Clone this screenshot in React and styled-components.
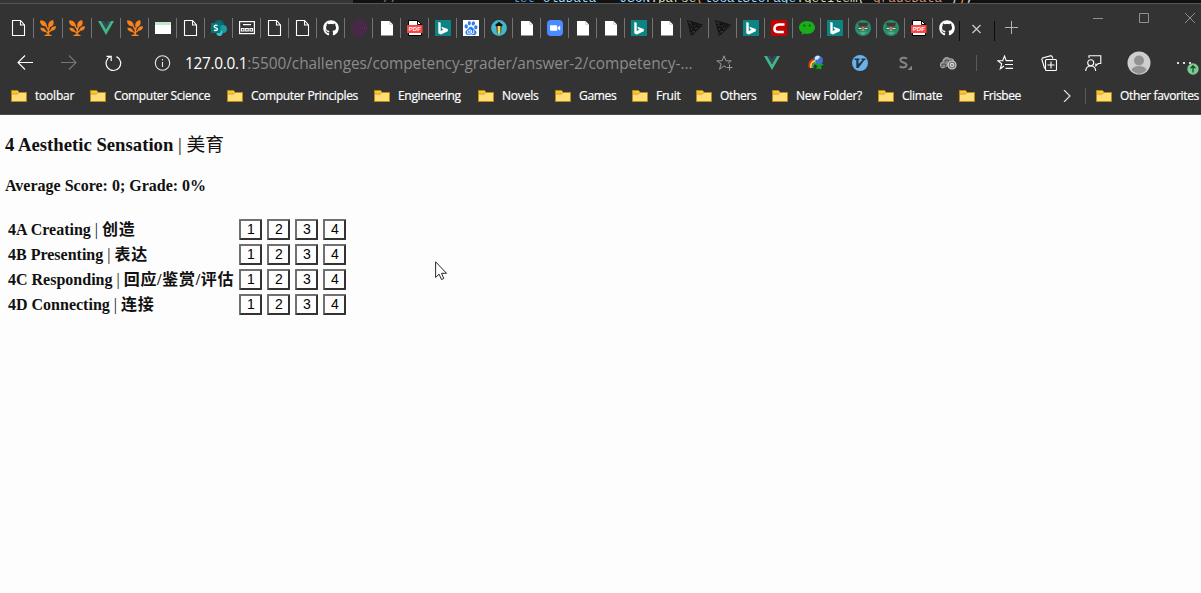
import React from "react";
import styled, { createGlobalStyle } from "styled-components";
import { FaGithub } from "react-icons/fa";
import { SiBaidu } from "react-icons/si";

const Global = createGlobalStyle`
  * { box-sizing: border-box; }
  html, body, #root { height: 100%; }
  body { margin: 0; background: #fdfdfd; overflow: hidden; }
  svg { display: block; flex: none; }
`;

const ui = `"Open Sans", "Noto Sans", sans-serif`;

const Window = styled.div`
  position: relative;
  display: flex;
  flex-direction: column;
  height: 593px;
  width: 1201px;
  overflow: hidden;
`;

const Chrome = styled.header`
  background: #333;
  color: #fff;
  border-bottom: 1px solid #4b4b4b;
  height: 115px;
  font-family: ${ui};
`;

/* Sliver of the editor window behind the browser */
const EditorEdge = styled.div`
  display: flex;
  height: 4px;
  overflow: hidden;
  border-bottom: 1px solid #555;
  background: #111;
`;
const EditorSide = styled.div`
  width: 353px;
  background: #363636;
`;
const Gutter = styled.span`
  width: 159px;
  padding-left: 30px;
  font: 12.8px/15px "Liberation Mono", monospace;
  color: #858585;
  margin-top: -9px;
`;
const Code = styled.code`
  font: 12.8px/15px "Liberation Mono", monospace;
  white-space: pre;
  color: #d4d4d4;
  margin-top: -9px;
`;
const Tok = styled.span`
  color: ${(p) => p.$c};
`;

const TabStrip = styled.div`
  display: flex;
  height: 42px;
  padding-left: 5px;
`;
const Tab = styled.div`
  width: ${(p) => (p.$wide ? 29 : 28)}px;
  height: 20px;
  margin-top: 14px;
  padding: 2px 0 0 6px;
  border-right: 1px solid #747474;
  flex: none;
`;
const ActiveTab = styled.div`
  display: flex;
  width: 62px;
  height: 20px;
  margin-top: 14px;
  padding: 2px 0 0 6px;
  flex: none;
`;
const CloseSlot = styled.div`
  display: flex;
  width: 36px;
  height: 20px;
  margin: 1px 0 0 4px;
  padding: 3px 0 0 12px;
  border-left: 1px solid #0c0c0c;
  border-right: 1px solid #0c0c0c;
`;
const NewTab = styled.div`
  padding: 17px 0 0 10px;
  width: 98px;
`;
const WindowControls = styled.div`
  display: flex;
  gap: 36px;
  padding-top: 9px;
`;

const Toolbar = styled.div`
  display: flex;
  align-items: center;
  height: 34px;
`;
const Slot = styled.div`
  width: ${(p) => p.$w}px;
  padding-left: ${(p) => p.$l || 0}px;
  flex: none;
`;
const Address = styled.div`
  width: 531px;
  padding-top: 2px;
  font-size: 15.4px;
  line-height: 32px;
  letter-spacing: -0.05px;
  color: #8b8b8b;
  white-space: nowrap;
  flex: none;
`;
const Host = styled.span`
  color: #fff;
  letter-spacing: -0.3px;
`;
const VRule = styled.div`
  width: 1px;
  height: 16px;
  background: #5a5a5a;
  flex: none;
`;
const Menu = styled.div`
  position: relative;
  width: 24px;
  height: 24px;
`;
const UpdateBadge = styled.div`
  position: absolute;
  left: 11px;
  top: 12px;
`;

const Bookmarks = styled.nav`
  display: flex;
  align-items: center;
  height: 32px;
  padding-left: 11px;
  font-size: 12px;
  line-height: 18px;
`;
const Bookmark = styled.div`
  display: flex;
  align-items: center;
  gap: 8px;
  width: ${(p) => p.$w}px;
  letter-spacing: ${(p) => p.$ls || 0}px;
  white-space: nowrap;
  flex: none;
  -webkit-text-stroke: 0.2px #fff;
`;

const Page = styled.main`
  flex: 1;
  background: #fdfdfd;
  padding-left: 5px;
  color: #111;
  font-family: "Liberation Serif", "Noto Sans CJK SC", serif;
`;
const Title = styled.h3`
  margin: 19px 0 0;
  font-size: 18.72px;
  line-height: 22px;
`;
const Light = styled.span`
  font-weight: 400;
`;
const Summary = styled.h4`
  margin: 20px 0 0;
  font-size: 16px;
  line-height: 20px;
`;
const Scores = styled.table`
  margin-top: 20px;
  border-spacing: 2px;
  font-size: 16px;
  line-height: 20px;
`;
const Skill = styled.th`
  height: 23px;
  width: 229px;
  padding: 0 1px;
  text-align: left;
  white-space: nowrap;
`;
const SkillText = styled.div`
  height: 20px;
`;
const Chinese = styled.span`
  letter-spacing: 0.7px;
`;
const ScoreCell = styled.td`
  width: 26px;
  height: 23px;
  padding: 1px;
`;
const ScoreButton = styled.button`
  display: block;
  width: 23px;
  height: 21px;
  padding: 0 0 0 1px;
  border: 2px solid;
  border-color: #707070 #333 #333 #707070;
  border-radius: 1px;
  background: #fdfdfd;
  color: #000;
  font: 14px/17px "Liberation Sans", sans-serif;
`;
const Pointer = styled.div`
  position: absolute;
  left: 435px;
  top: 261px;
`;

const Svg = ({ w = 16, h = 16, children, ...p }) => (
  <svg width={w} height={h} viewBox={`0 0 ${w} ${h}`} fill="none" {...p}>
    {children}
  </svg>
);

const Doc = () => (
  <Svg stroke="#fff" strokeWidth="1.1">
    <path d="M1.5.5h8l4 4.500v10.500h-12zM9.500.5v4.500h4" />
  </Svg>
);
const WhitePage = () => (
  <Svg>
    <path d="M2 1h8.5L14 4.5V15.5H2z" fill="#fff" />
    <path d="M10.5 1v3.5H14" stroke="#ccc" strokeWidth=".7" />
  </Svg>
);
const Plant = () => (
  <Svg fill="#f9831c">
    <path d="M0 .5C3.500 0 6.800 2 6.800 6.300 2.800 6.800 0 4.500 0 .5zM13 0c1.600 3.400.4 6.500-4 7.500C7 4.300 9 .9 13 0zM16 6.300c0 3.200-2.200 4.900-5.500 4.500.1-3.200 2.300-4.800 5.500-4.500zM.3 7.800c3.200-.5 5.400.8 5.900 4C2.900 12.300.6 10.800.3 7.800z" />
    <path d="M5.500 5l2.500 4.500M9.800 6L8.300 9.500V15M5 11l3 2M11.500 10L8.500 12.500" stroke="#f9831c" strokeWidth="1.4" />
    <path d="M3.800 16q4.200-3.800 8.400 0z" />
  </Svg>
);
const Vue = () => (
  <Svg>
    <path d="M0 1h3.200L8 9.300 12.800 1H16L8 14.900z" fill="#41b883" />
    <path d="M3.200 1h3L8 4.200 9.800 1h3L8 9.300z" fill="#35495e" />
  </Svg>
);
const Panel = () => (
  <Svg>
    <path d="M0 2h16v12H0z" fill="#fff" />
    <path d="M0 2h16v3H0z" fill="#c5e6c8" />
  </Svg>
);
const SharePoint = () => (
  <Svg>
    <circle cx="8" cy="5" r="5" fill="#036c70" />
    <circle cx="12" cy="9" r="4" fill="#1a9ba1" />
    <circle cx="8.5" cy="13" r="3" fill="#37c6d0" />
    <rect y="3" width="9.5" height="10" rx="1" fill="#03787c" />
    <path d="M6.500 5.700C5 4.800 3 5.300 3.200 6.700c.2 1.300 3.300.9 3.300 2.500 0 1.400-2.200 1.700-3.500.8" stroke="#fff" strokeWidth="1.3" />
  </Svg>
);
const Router = () => (
  <Svg stroke="#fff" strokeWidth="1.2">
    <rect x=".6" y="1.600" width="14.800" height="12" />
    <path d="M4 4.600h8M2.500 8.500h2.500v2.500h-2.500zM6.700 8.500h2.500v2.500h-2.500zM11 8.500h2.500v2.500h-2.500z" />
  </Svg>
);
const Purple = () => (
  <Svg stroke="#a0009c" strokeWidth="1" strokeDasharray="1.200 1.300">
    <circle cx="8" cy="8" r="7.400" />
    <circle cx="8" cy="8" r="5.500" />
    <circle cx="8" cy="8" r="3.500" />
    <circle cx="8" cy="8" r="1.500" />
  </Svg>
);
const Pdf = () => (
  <Svg>
    <path d="M1.500.5h9l4 4v11h-13z" fill="#fff" stroke="#000" />
    <path d="M10.500.5v4h4" stroke="#000" />
    <rect y="5" width="15.500" height="8" rx=".6" fill="#ff4541" />
    <text x="7.800" y="11.200" textAnchor="middle" fontFamily="Liberation Sans, sans-serif" fontWeight="700" fontSize="6" fill="#fff">PDF</text>
  </Svg>
);
const Bing = () => (
  <Svg>
    <path d="M0 0h16v16H0z" fill="#0c8484" />
    <path d="M3.300 2l2.400.8v8.300l2.800-1.500-1.300-.7-.9-2.200 6.500 2.200v2.400l-7 3.300L3.300 13.200z" fill="#fff" />
  </Svg>
);
const BaiduBox = styled.div`
  width: 16px;
  height: 16px;
  padding: 1px;
  background: #fff;
  color: #2a7cf0;
`;
const Baidu = () => (
  <BaiduBox>
    <SiBaidu size={14} />
  </BaiduBox>
);
const Pen = () => (
  <Svg>
    <circle cx="8" cy="8" r="7.900" fill="#40b8cf" />
    <path d="M5.500 5.500h5L9.600 13.500H6.400z" fill="#f8d64c" />
    <path d="M4 5l4-3.300L12 5l-1.500 1.500L10 13.500H9.500V6H6.500v7.500H6L5.500 6.500z" fill="#111" />
  </Svg>
);
const Zoom = () => (
  <Svg>
    <rect width="16" height="16" rx="4" fill="#4a8cff" />
    <path d="M3 5.200h6q1.200 0 1.200 1.200v4.400H4.200Q3 10.800 3 9.600zM10.800 7.200L13.200 5.400v5.200L10.800 8.900z" fill="#fff" />
  </Svg>
);
const Mesh = () => (
  <Svg stroke="#101010" strokeWidth=".9">
    <path d="M.5.600L15.500 5 4.500 15.500zM4.500 1.800l4 9.700M8.500 2.900l3.200 5.700M12 4l1.300 3M1.500 4.200L12 4M2.500 8l11-2M3.500 11.500L11.700 8.600M1.500 4.200l7 7.300M4.500 1.800L11.700 8.600M2.500 8l3.500 6M2.500 8l6-5M3.500 11.500l8.500-7.500" />
  </Svg>
);
const RedC = () => (
  <Svg>
    <path d="M0 0h16v16H0z" fill="#c70000" />
    <path d="M13.500 4.500H8.500Q3.800 4.600 3.400 8.500 3.400 12 7 12h5.800" stroke="#fff" strokeWidth="2.5" />
  </Svg>
);
const Chat = () => (
  <Svg>
    <path d="M8 1c4.500 0 8 2.800 8 6.400s-3.500 6.500-8 6.500c-.9 0-1.800-.1-2.600-.3L2.600 15l.5-2.500C1.200 11.300 0 9.500 0 7.400 0 3.800 3.500 1 8 1z" fill="#1aad19" />
    <circle cx="5.3" cy="5.500" r="1" fill="#14500f" />
    <circle cx="10.7" cy="5.500" r="1" fill="#14500f" />
  </Svg>
);
const Grad = () => (
  <Svg>
    <circle cx="8" cy="8" r="8" fill="#249070" />
    <path d="M4 6h8v3.500L8 11 4 9.500z" fill="#c4a283" />
    <path d="M3 2.700h10l-1 4H4z" fill="#45372d" />
    <path d="M3 7.500h4v2H3zM9 7.500h4v2H9z" fill="#d9ecc8" stroke="#234f40" strokeWidth=".8" />
    <path d="M4 12.500h8L8 14.500z" fill="#6fb59c" />
  </Svg>
);
const Github = () => <FaGithub size={16} color="#fff" />;

const Folder = () => (
  <Svg>
    <path d="M.5 2.500h6l1.500 2h7.500v9H.5z" fill="#ffde7a" stroke="#b78a12" />
    <path d="M1 3h5.200l1 1.500L6 5.500H1z" fill="#ffc530" />
    <path d="M1 6h5.500L8 4.500" stroke="#b78a12" strokeWidth=".8" />
  </Svg>
);

const tabs = [
  Doc, Plant, Plant, Vue, Plant, Panel, Doc, SharePoint, Router, Doc, Doc,
  Github, Purple, WhitePage, Pdf, Bing, Baidu, Pen, WhitePage, Zoom,
  WhitePage, WhitePage, Bing, WhitePage, Mesh, Mesh, Bing, RedC, Chat, Bing,
  Grad, Grad, Pdf,
];

const bookmarks = [
  ["toolbar", 79, -0.2],
  ["Computer Science", 137, -0.34],
  ["Computer Principles", 147, -0.36],
  ["Engineering", 104, -0.32],
  ["Novels", 77, -0.2],
  ["Games", 77, -0.32],
  ["Fruit", 64, -0.25],
  ["Others", 76, -0.3],
  ["New Folder?", 106, -0.25],
  ["Climate", 81, -0.3],
  ["Frisbee", 104, -0.4],
];

const skills = [
  ["4A Creating", "创造"],
  ["4B Presenting", "表达"],
  ["4C Responding", "回应/鉴赏/评估"],
  ["4D Connecting", "连接"],
];

export default function App() {
  return (
    <Window>
      <Global />
      <Chrome>
        <EditorEdge>
          <EditorSide />
          <Gutter>//</Gutter>
          <Code>
            <Tok $c="#569cd6">let </Tok>
            <Tok $c="#9cdcfe">oldData</Tok> = <Tok $c="#9cdcfe">JSON</Tok>.
            <Tok $c="#dcdcaa">parse</Tok>
            <Tok $c="#ff8c3a">(</Tok>
            <Tok $c="#9cdcfe">localStorage</Tok>.<Tok $c="#dcdcaa">getItem</Tok>
            (<Tok $c="#ce9178">'gradeData'</Tok>)<Tok $c="#ff8c3a">)</Tok>;
          </Code>
        </EditorEdge>

        <TabStrip>
          {tabs.map((Icon, i) => (
            <Tab key={i} $wide={i < 4}>
              <Icon />
            </Tab>
          ))}
          <ActiveTab>
            <Github />
            <CloseSlot>
              <Svg w={10} h={10} stroke="#ccc" strokeWidth="1.2">
                <path d="M.5 1l8 8M8.500 1l-8 8" />
              </Svg>
            </CloseSlot>
          </ActiveTab>
          <NewTab>
            <Svg w={13} h={13} stroke="#b5b5b5">
              <path d="M0 6.500h13M6.500 0v13" />
            </Svg>
          </NewTab>
          <WindowControls>
            <Svg w={10} h={10} stroke="#909090"><path d="M0 5.500h10" /></Svg>
            <Svg w={10} h={10} stroke="#909090"><path d="M.5.5h9v9h-9z" /></Svg>
            <Svg w={10} h={10} stroke="#909090"><path d="M0 0l10 10M10 0L0 10" /></Svg>
          </WindowControls>
        </TabStrip>

        <Toolbar>
          <Slot $w={61} $l={17}>
            <Svg stroke="#fff" strokeWidth="1.1"><path d="M16 7.500H.8M8 .500l-7 7 7 7" /></Svg>
          </Slot>
          <Slot $w={44}>
            <Svg stroke="#777" strokeWidth="1.1"><path d="M0 7.500h15.200M8 .500l7 7-7 7" /></Svg>
          </Slot>
          <Slot $w={49}>
            <Svg w={17} h={17} stroke="#fff" strokeWidth="1.2">
              <path d="M11.500 1.600A7.300 7.300 0 1 1 5.500 1.500M1.500 1.300h4.700v4.800" />
            </Svg>
          </Slot>
          <Slot $w={31}>
            <Svg w={17} h={17} stroke="#e8e8e8" strokeWidth="1.1">
              <circle cx="8.500" cy="8" r="7.200" />
              <path d="M8.500 7v5M8.500 4v1.400" />
            </Svg>
          </Slot>
          <Address>
            <Host>127.0.0.1</Host>:5500/challenges/competency-grader/answer-2/competency-...
          </Address>
          <Slot $w={48}>
            <Svg w={18} h={17} stroke="#999">
              <path d="M10 12.200L8 10.900l-4.500 3.400 1.600-5.400L.8 5.800h5.300L8 .8l1.900 5h5.300L12 8.300M13.500 9.500v6M10.500 12.500h6" />
            </Svg>
          </Slot>
          <Slot $w={44}><Vue /></Slot>
          <Slot $w={44}>
            <Svg>
              <circle cx="10" cy="5.500" r="5" fill="#3d72cf" />
              <path d="M7 2q3-3 5 0l-2 2.500-3 .5z" fill="#d6e7f8" />
              <path d="M1.300 12.500Q.5 5.500 6 4.500" stroke="#e02d25" strokeWidth="1.800" />
              <path d="M3 13Q2 6.500 7.500 6" stroke="#ffd531" strokeWidth="1.800" />
              <path d="M4.800 13Q4 8.500 8 7.800" stroke="#34a853" strokeWidth="1.800" />
              <path d="M7 8.500l9 .5-3 2.500.5 3-3-1-3 .5 2-2.500z" fill="#14a51d" />
            </Svg>
          </Slot>
          <Slot $w={47}>
            <Svg>
              <circle cx="8" cy="8" r="8" fill="#69b1e8" />
              <path d="M2.500 3.500h5v1.500H6.500v4l4-4H9.500V3.500h4V5h-1L6.500 13H4.300V5H2.500z" fill="#253848" />
            </Svg>
          </Slot>
          <Slot $w={41}>
            <Svg w={14}>
              <path d="M8 3.600C5.500 2 1.200 2.500 1.500 5.300 1.800 8 7.500 7 7.500 10c0 2.800-4.300 3-6.800 1.300" stroke="#858585" strokeWidth="2" />
              <path d="M13 10.500V15H8.500z" fill="#858585" />
            </Svg>
          </Slot>
          <Slot $w={36}>
            <Svg w={17} stroke="#c0c0c0" strokeWidth="1.1">
              <path d="M2.500 13C-.5 11.500 0 7 3 7 3 2.500 8 1.500 9.500 4c3-.8 4.500 1 4 3L7 11z" fill="#8a8a8a" stroke="#a8a8a8" />
              <path d="M2.500 12Q1 9 4 9t1 3M5 7.500Q5 5 7 5t1.500 2M10 5.500q2-.5 2 1" stroke="#555" />
              <circle cx="12" cy="10" r="4" fill="#777" stroke="#d8d8d8" />
              <circle cx="12" cy="10" r="1.600" stroke="#d8d8d8" />
            </Svg>
          </Slot>
          <VRule />
          <Slot $w={64} $l={20}>
            <Svg w={17} stroke="#fff" strokeWidth="1.1">
              <path d="M12 5.600H9.200L7.500 1 5.700 5.700H.8L4.700 8.700 3.300 13.800 7 11M9.500 5.600H16M8 9.500h8M8.500 13.400H16" />
            </Svg>
          </Slot>
          <Slot $w={44}>
            <Svg w={17} h={17} stroke="#fff" strokeWidth="1.1">
              <path d="M4.500 13.500l-1-.5L.8 4.200 1.500 3l8.500-2.300 1.200.8.600 2" />
              <rect x="4.500" y="4.500" width="11" height="11" rx="1" />
              <path d="M10 6.500v7M6.500 10h7" />
            </Svg>
          </Slot>
          <Slot $w={42}>
            <Svg w={17} h={17} stroke="#fff" strokeWidth="1.1">
              <circle cx="5.700" cy="7.700" r="3" />
              <path d="M.7 16Q1 11 5.700 11t5 5M4 3V.8h11.800v7.700h-2.500l-2.500 2.300V8.500" />
            </Svg>
          </Slot>
          <Slot $w={49}>
            <Svg w={24} h={24}>
              <circle cx="12" cy="12" r="11.500" fill="#cecece" />
              <circle cx="12" cy="9.500" r="5" fill="#929292" />
              <path d="M4.500 19q1.500-4 7.500-4t7.500 4Q12 26.500 4.500 19z" fill="#929292" />
            </Svg>
          </Slot>
          <Menu>
            <Svg w={18} h={24}>
              <path d="M1 11h2v2H1zM7 11h2v2H7zM13 11h2v2h-2z" fill="#ddd" />
            </Svg>
            <UpdateBadge>
              <Svg w={12} h={12}>
                <circle cx="6" cy="6" r="5.700" fill="#7cc992" />
                <path d="M6 9.500V3M3.500 5.300L6 2.800l2.500 2.500" stroke="#163f22" strokeWidth="1.2" />
              </Svg>
            </UpdateBadge>
          </Menu>
        </Toolbar>

        <Bookmarks>
          {bookmarks.map(([name, w, ls]) => (
            <Bookmark key={name} $w={w} $ls={ls}>
              <Folder />
              {name}
            </Bookmark>
          ))}
          <Slot $w={22}>
            <Svg w={8} h={12} stroke="#ddd" strokeWidth="1.2"><path d="M1 0l6 6-6 6" /></Svg>
          </Slot>
          <VRule />
          <Slot $w={10} />
          <Bookmark $w={105} $ls={-0.36}>
            <Folder />
            Other favorites
          </Bookmark>
        </Bookmarks>
      </Chrome>

      <Page>
        <Title>
          4 Aesthetic Sensation <Light>| 美育</Light>
        </Title>
        <Summary>Average Score: 0; Grade: 0%</Summary>
        <Scores>
          <tbody>
            {skills.map(([en, zh]) => (
              <tr key={en}>
                <Skill>
                  <SkillText>
                    {en} <Light>|</Light> <Chinese>{zh}</Chinese>
                  </SkillText>
                </Skill>
                {[1, 2, 3, 4].map((n) => (
                  <ScoreCell key={n}>
                    <ScoreButton>{n}</ScoreButton>
                  </ScoreCell>
                ))}
              </tr>
            ))}
          </tbody>
        </Scores>
      </Page>

      <Pointer>
        <Svg w={13} h={20}>
          <path d="M.6.800v15.600l3.500-3.200 2.400 5.300 2.300-1-2.300-5.200h5z" fill="#fff" stroke="#111" strokeWidth=".9" />
        </Svg>
      </Pointer>
    </Window>
  );
}
